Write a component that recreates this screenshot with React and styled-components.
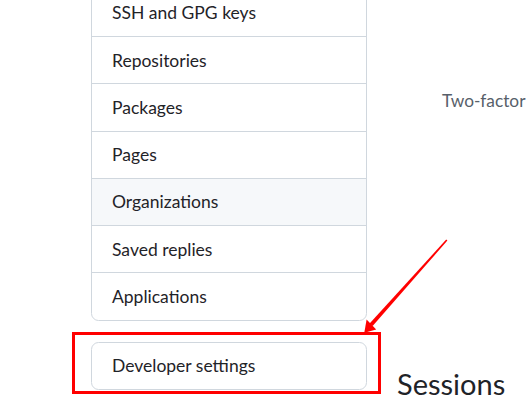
import React from "react";
import styled, { createGlobalStyle } from "styled-components";

const GlobalStyle = createGlobalStyle`
  html, body {
    margin: 0;
    padding: 0;
    background: #ffffff;
  }
  body {
    font-family: Lato, "Open Sans", "Liberation Sans", sans-serif;
    color: #1f2328;
  }
`;

const menuItems = [
  { label: "SSH and GPG keys" },
  { label: "Repositories" },
  { label: "Packages" },
  { label: "Pages" },
  { label: "Organizations", hovered: true },
  { label: "Saved replies" },
  { label: "Applications" },
];

const Page = styled.div`
  position: relative;
  width: 530px;
  height: 409px;
  overflow: hidden;
  display: flex;
  padding-left: 91px;
  box-sizing: border-box;
`;

const Sidebar = styled.nav`
  width: 276px;
  flex-shrink: 0;
  display: flex;
  flex-direction: column;
  gap: 21px;
  margin-top: -11.25px;
`;

const Menu = styled.div`
  border: 1px solid #d0d7de;
  border-radius: 7.5px;
  overflow: hidden;
  display: flex;
  flex-direction: column;
  background: #ffffff;
`;

const MenuItem = styled.a`
  display: flex;
  align-items: center;
  height: 46.25px;
  padding: 0 20px;
  font-size: 17.5px;
  color: #1f2328;
  text-decoration: none;
  background: ${(p) => (p.$hovered ? "#f6f8fa" : "transparent")};
  & + & {
    border-top: 1px solid #d0d7de;
  }
`;

const Main = styled.main`
  flex: 1;
  display: flex;
  flex-direction: column;
  padding-left: 30px;
  min-width: 0;
`;

const TwoFactor = styled.div`
  margin-top: 88px;
  padding-left: 45px;
  font-size: 17.3px;
  line-height: 25px;
  color: #57606a;
  white-space: nowrap;
`;

const Subhead = styled.h2`
  margin: 253px 0 0;
  font-size: 29px;
  line-height: 36px;
  font-weight: 400;
  color: #1f2328;
  white-space: nowrap;
`;

const Highlight = styled.div`
  position: absolute;
  left: 72px;
  top: 332px;
  width: 309px;
  height: 62px;
  box-sizing: border-box;
  border: 3px solid #ff0000;
  pointer-events: none;
`;

const Overlay = styled.svg`
  position: absolute;
  left: 0;
  top: 0;
  width: 530px;
  height: 409px;
  pointer-events: none;
`;

function Arrow() {
  return (
    <Overlay viewBox="0 0 530 409">
      <polygon
        points="446.2,239.6 447.4,240.6 372.6,326 369.6,323.4"
        fill="#ff0000"
      />
      <polygon points="364.3,332.8 366.6,319.4 376.2,329.4" fill="#ff0000" />
    </Overlay>
  );
}

export default function App() {
  return (
    <>
      <GlobalStyle />
      <Page>
        <Sidebar>
          <Menu>
            {menuItems.map((item) => (
              <MenuItem key={item.label} $hovered={item.hovered}>
                {item.label}
              </MenuItem>
            ))}
          </Menu>
          <Menu>
            <MenuItem>Developer settings</MenuItem>
          </Menu>
        </Sidebar>
        <Main>
          <TwoFactor>Two-factor</TwoFactor>
          <Subhead>Sessions</Subhead>
        </Main>
        <Highlight />
        <Arrow />
      </Page>
    </>
  );
}
